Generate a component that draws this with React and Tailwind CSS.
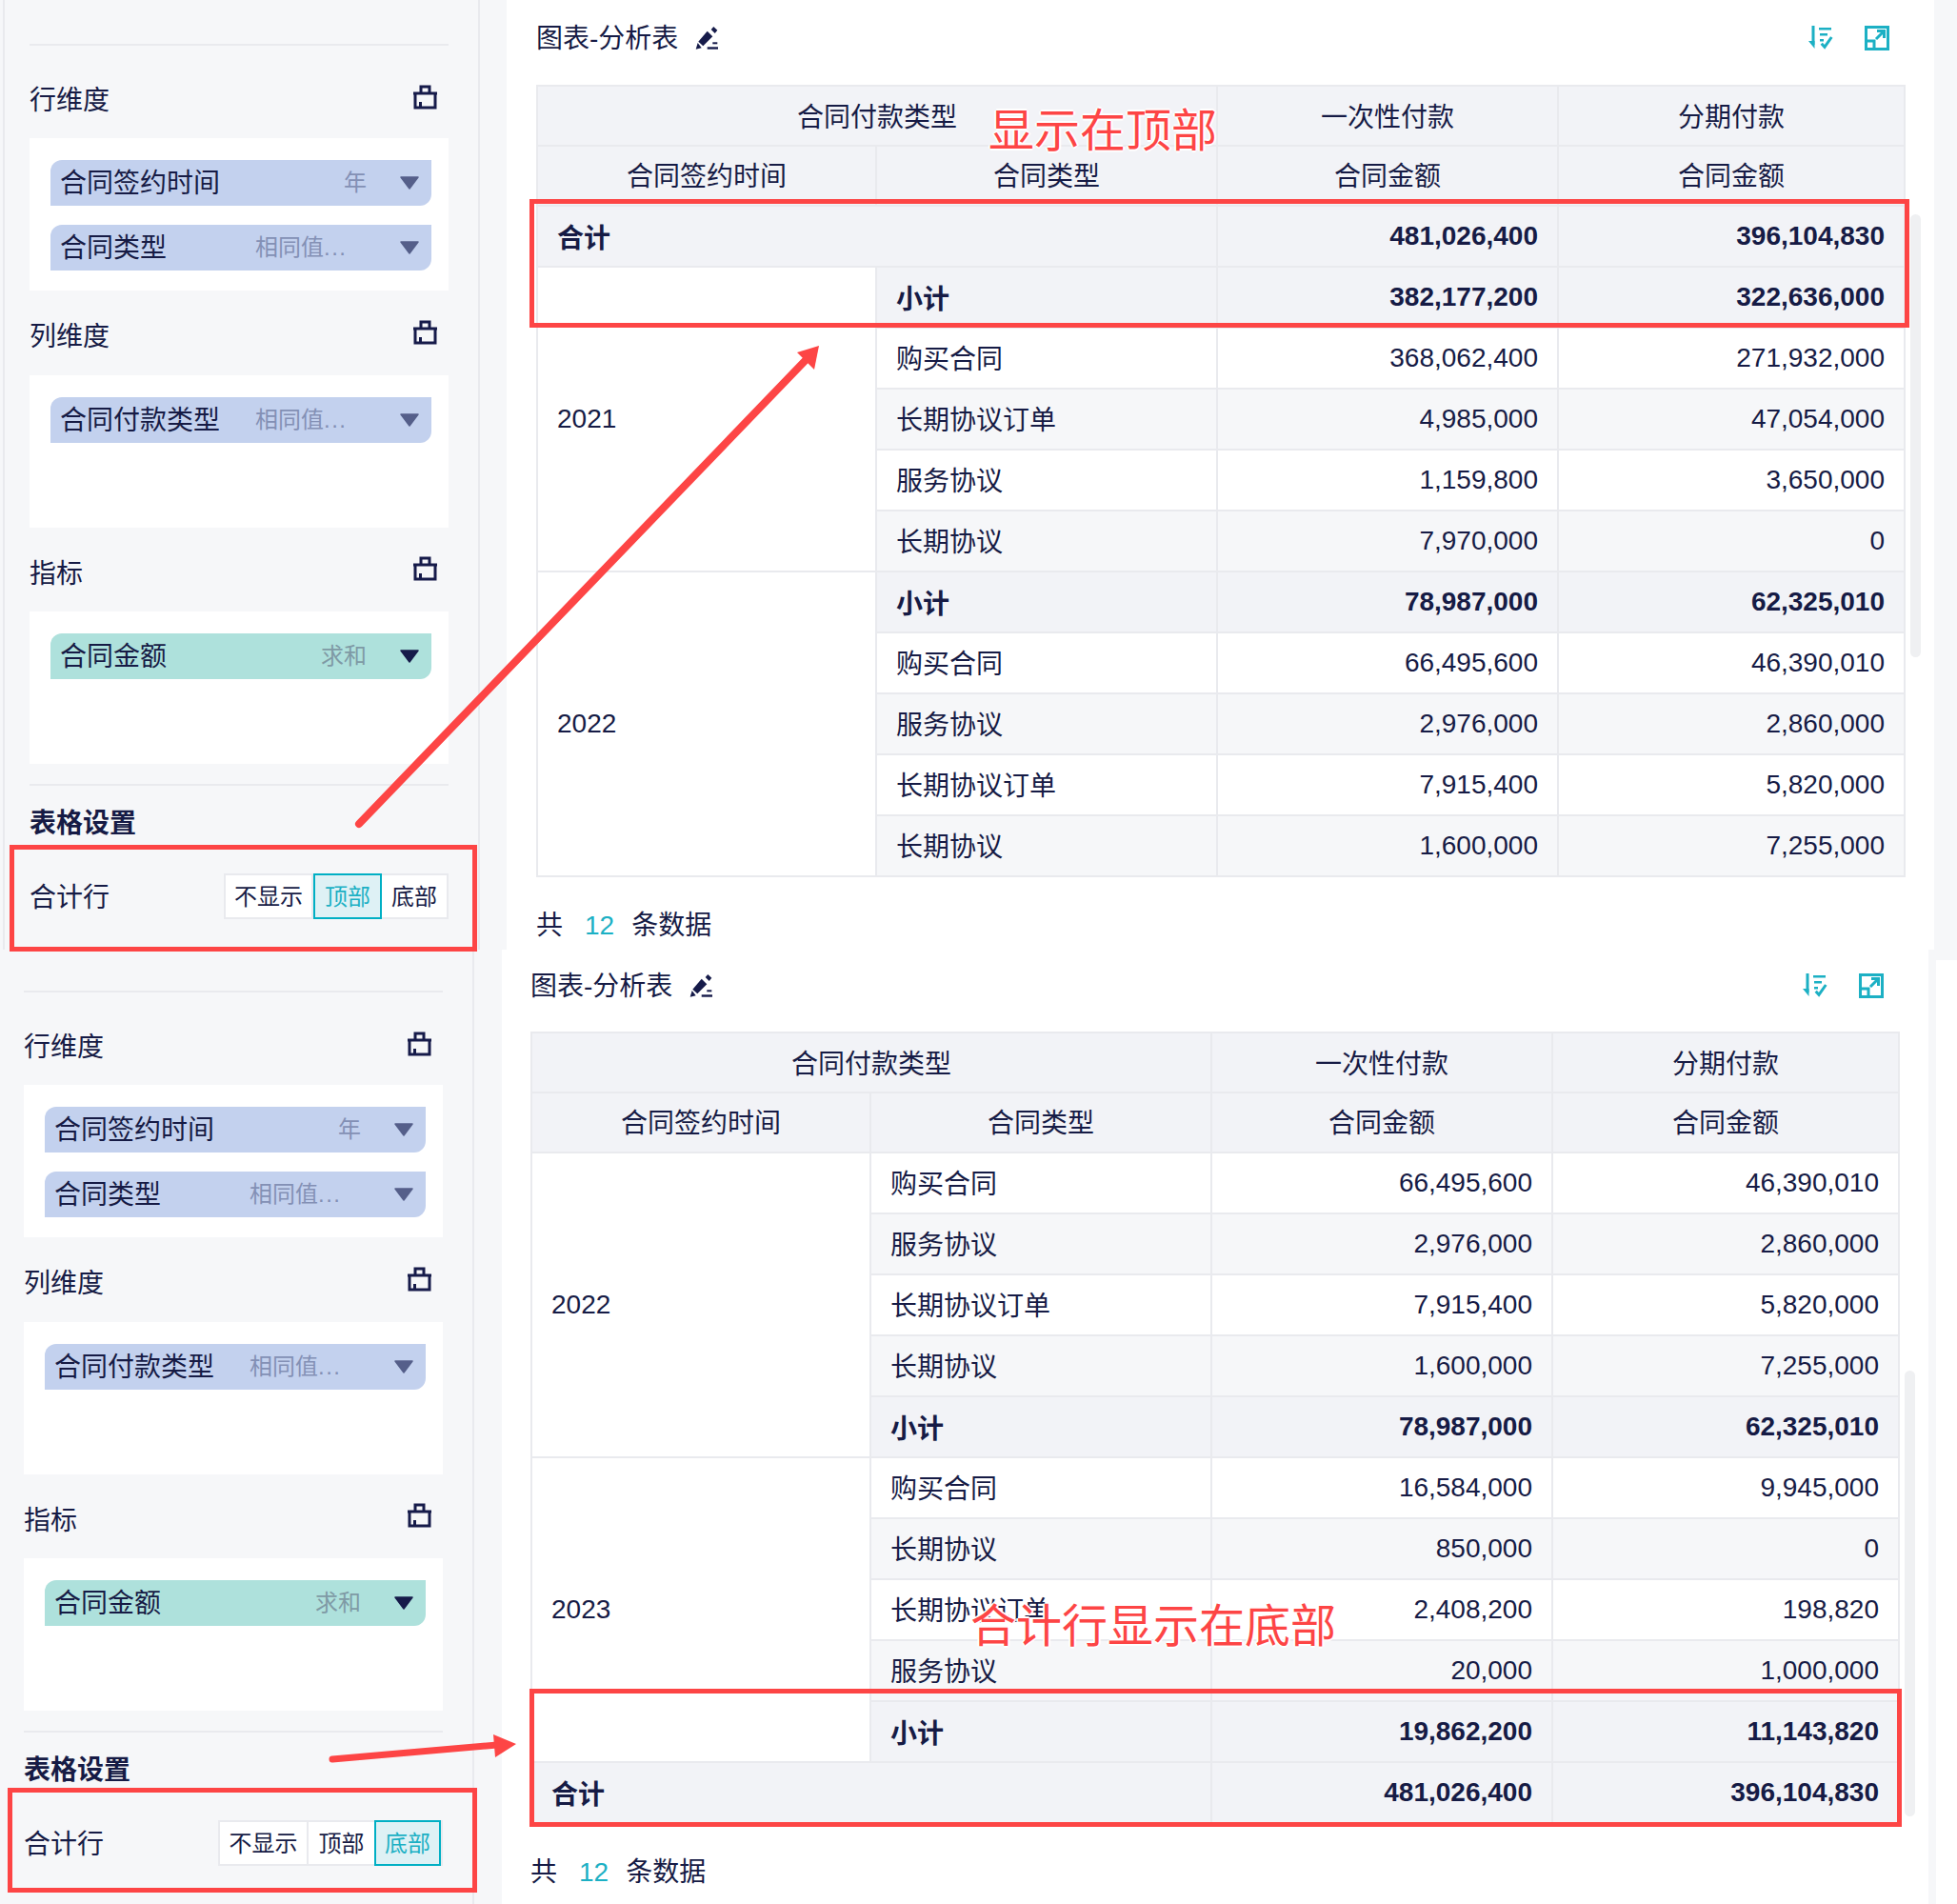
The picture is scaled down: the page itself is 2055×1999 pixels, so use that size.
import React from "react";

const topRows = [
  { total: true, name: "合计", a: "481,026,400", b: "396,104,830" },
  { year: "2021", span: 5, sub: true, name: "小计", a: "382,177,200", b: "322,636,000" },
  { name: "购买合同", a: "368,062,400", b: "271,932,000" },
  { name: "长期协议订单", a: "4,985,000", b: "47,054,000", odd: true },
  { name: "服务协议", a: "1,159,800", b: "3,650,000" },
  { name: "长期协议", a: "7,970,000", b: "0", odd: true },
  { year: "2022", span: 5, sub: true, name: "小计", a: "78,987,000", b: "62,325,010" },
  { name: "购买合同", a: "66,495,600", b: "46,390,010" },
  { name: "服务协议", a: "2,976,000", b: "2,860,000", odd: true },
  { name: "长期协议订单", a: "7,915,400", b: "5,820,000" },
  { name: "长期协议", a: "1,600,000", b: "7,255,000", odd: true },
];

const bottomRows = [
  { year: "2022", span: 5, name: "购买合同", a: "66,495,600", b: "46,390,010" },
  { name: "服务协议", a: "2,976,000", b: "2,860,000", odd: true },
  { name: "长期协议订单", a: "7,915,400", b: "5,820,000" },
  { name: "长期协议", a: "1,600,000", b: "7,255,000", odd: true },
  { sub: true, name: "小计", a: "78,987,000", b: "62,325,010" },
  { year: "2023", span: 5, name: "购买合同", a: "16,584,000", b: "9,945,000" },
  { name: "长期协议", a: "850,000", b: "0", odd: true },
  { name: "长期协议订单", a: "2,408,200", b: "198,820" },
  { name: "服务协议", a: "20,000", b: "1,000,000", odd: true },
  { sub: true, name: "小计", a: "19,862,200", b: "11,143,820" },
  { total: true, name: "合计", a: "481,026,400", b: "396,104,830" },
];

const cell = "border-2 border-[#e9eaee] px-[20px] font-normal";

function BucketIcon() {
  return (
    <svg width="27" height="26" viewBox="0 0 27 26" fill="none" stroke="#161b4a" strokeWidth="3" className="-translate-y-[3px]">
      <path d="M9 9V2h9v7M1 9h25M3 9v15h21V9M8.5 24v-6" />
    </svg>
  );
}

function Caret({ color }) {
  return (
    <svg width="20" height="14" viewBox="0 0 20 14" className="shrink-0">
      <polygon points="1,1 19,1 10,13" fill={color} stroke={color} strokeWidth="1.5" strokeLinejoin="round" />
    </svg>
  );
}

function Pill({ label, extra, green, left }) {
  return (
    <div className={`flex h-[48px] w-[400px] items-center rounded-tl-[12px] rounded-br-[12px] pl-[10px] pr-[13px] ${green ? "bg-[#aee1dc]" : "bg-[#c3d1ee]"}`}>
      <span className="flex-1 pt-[2px] text-[28px]">{label}</span>
      <span className={`mr-[35px] w-[117px] text-[24px] ${left ? "text-left" : "text-right"} ${green ? "text-[#7f9aa5]" : "text-[#8390b5]"}`}>
        {extra}
        {left && <span className="tracking-[1.5px]">...</span>}
      </span>
      <Caret color={green ? "#161b4a" : "#555f8a"} />
    </div>
  );
}

function Section({ title, size, children }) {
  const heights = {
    first: "h-[97px] pt-[16px]",
    middle: "h-[89px] pt-[4px]",
    last: "h-[88px] pt-[4px]",
  };
  return (
    <>
      <div className={`flex items-center justify-between pr-[11px] text-[28px] ${heights[size]}`}>
        <span className={size === "first" ? "pt-[3px]" : "pt-[5px]"}>{title}</span>
        <BucketIcon />
      </div>
      <div className="flex h-[160px] flex-col gap-[20px] bg-white pl-[22px] pt-[23px]">{children}</div>
    </>
  );
}

function Segment({ active, widths }) {
  const items = ["不显示", "顶部", "底部"];
  return (
    <div className="flex h-[48px] border-2 border-[#e9eaee] bg-white text-[24px]">
      {items.map((t, i) =>
        t === active ? (
          <div key={t} style={{ width: widths[i] }} className="-my-[2px] flex h-[48px] items-center justify-center border-2 border-[#00afc4] bg-[#def1f5] pt-[2px] text-[#1cb0c4]">
            {t}
          </div>
        ) : (
          <div key={t} style={{ width: widths[i] }} className={`flex items-center justify-center pt-[2px] ${i === 0 ? "border-r-2 border-[#e9eaee]" : ""}`}>
            {t}
          </div>
        )
      )}
    </div>
  );
}

function SidePanel({ second }) {
  return (
    <div className={`h-full shrink-0 bg-[#f6f7f9] ${second ? "w-[527px] pl-0" : "w-[532px] pl-[3px]"}`}>
      <div className={`flex h-full w-fit flex-col border-r-2 border-[#e9eaee] pr-[31px] ${second ? "pl-[25px] pt-[43px]" : "border-l-2 pl-[26px] pt-[46px]"}`}>
        <div className="w-[440px]">
          <div className="h-[2px] bg-[#e9eaee]"></div>
          <Section title="行维度" size="first">
            <Pill label="合同签约时间" extra="年" />
            <Pill label="合同类型" extra="相同值" left />
          </Section>
          <Section title="列维度" size="middle">
            <Pill label="合同付款类型" extra="相同值" left />
          </Section>
          <Section title="指标" size="last">
            <Pill label="合同金额" extra="求和" green />
          </Section>
          <div className="mt-[21px] h-[2px] bg-[#e9eaee]"></div>
          <div className="mt-[20px] h-[40px] text-[28px] font-bold leading-[40px]">表格设置</div>
          <div className="mt-[32px] flex items-center justify-between">
            <span className="pt-[3px] text-[28px]">合计行</span>
            {second ? <Segment active="底部" widths={[93, 69, 70]} /> : <Segment active="顶部" widths={[92, 72, 68]} />}
          </div>
        </div>
      </div>
    </div>
  );
}

function DataTable({ rows }) {
  return (
    <table className="w-[1436px] table-fixed border-collapse text-[28px]">
      <colgroup>
        <col className="w-[356px]" />
        <col className="w-[358px]" />
        <col className="w-[358px]" />
        <col className="w-[364px]" />
      </colgroup>
      <thead className="bg-[#f2f3f7]">
        <tr className="h-[63px]">
          <th colSpan={2} className={`${cell} pt-[4px]`}>合同付款类型</th>
          <th className={`${cell} pt-[4px]`}>一次性付款</th>
          <th className={`${cell} pt-[4px]`}>分期付款</th>
        </tr>
        <tr className="h-[63px]">
          <th className={`${cell} pt-[3px]`}>合同签约时间</th>
          <th className={`${cell} pt-[3px]`}>合同类型</th>
          <th className={`${cell} pt-[3px]`}>合同金额</th>
          <th className={`${cell} pt-[3px]`}>合同金额</th>
        </tr>
      </thead>
      <tbody>
        {rows.map((r, i) => {
          const strong = r.total || r.sub;
          const bg = strong ? "bg-[#f2f3f7] !font-bold" : r.odd ? "bg-[#f6f7f9]" : "bg-white";
          return (
            <tr key={i} className="h-[64px]">
              {r.total ? (
                <td colSpan={2} className={`${cell} bg-[#f2f3f7] pt-[5px] !font-bold`}>{r.name}</td>
              ) : (
                <>
                  {r.year && <td rowSpan={r.span} className={`${cell} bg-white`}>{r.year}</td>}
                  <td className={`${cell} ${bg} ${strong ? "pt-[5px]" : "pt-[3px]"}`}>{r.name}</td>
                </>
              )}
              <td className={`${cell} ${bg} text-right`}>{r.a}</td>
              <td className={`${cell} ${bg} text-right`}>{r.b}</td>
            </tr>
          );
        })}
      </tbody>
    </table>
  );
}

function TitleBar({ second }) {
  return (
    <div className={`flex items-center justify-between pr-[47px] ${second ? "h-[86px] pb-[10px]" : "h-[89px] pb-[9px]"}`}>
      <div className="flex items-center gap-[18px] text-[28px]">
        <span className="pt-[2px]">图表-分析表</span>
        <svg width="25" height="25" viewBox="0 0 25 25" fill="#161b4a">
          <polygon points="12.7,4.7 18.3,10.3 8.3,20.3 3.3,15.7" />
          <polygon points="19.3,0 23.3,3.7 20.7,7 16.7,3" />
          <polygon points="2.7,17 6.7,22.3 0.7,23.7" />
          <rect x="18.3" y="16.3" width="5" height="2" />
          <rect x="12.7" y="21.3" width="11.3" height="2.4" />
        </svg>
      </div>
      <div className="flex items-center gap-[33px]">
        <svg width="26" height="26" viewBox="0 0 26 26" fill="#1cb0c4">
          <rect x="3.5" y="0" width="3" height="20" />
          <polygon points="0,16 6.5,16 6.5,24" />
          <rect x="11" y="2" width="13" height="2.5" />
          <rect x="12" y="8" width="8" height="2.5" />
          <rect x="12" y="14" width="4" height="2.5" />
          <path d="M13.7 18.7L17 22.3L24.3 12" fill="none" stroke="#1cb0c4" strokeWidth="3" />
        </svg>
        <svg width="26" height="26" viewBox="0 0 26 26" fill="none" stroke="#1cb0c4" strokeWidth="3">
          <rect x="1.5" y="1.5" width="23" height="23" />
          <path d="M1.5 16H10V24.5M12 14L20 6M13 5.5H20.5V13" />
        </svg>
      </div>
    </div>
  );
}

function Footer() {
  return (
    <div className="flex h-[69px] items-end text-[28px] leading-[36px]">
      <span>共</span>
      <span className="ml-[23px] text-[#1cb0c4]">12</span>
      <span className="ml-[18px]">条数据</span>
    </div>
  );
}

function Scrollbar({ className }) {
  return <div className={`absolute w-[11px] rounded-[6px] bg-[#eff0f2] ${className}`}></div>;
}

function RedBox({ className }) {
  return <div className={`pointer-events-none absolute border-[5px] border-[#fd4545] ${className}`}></div>;
}

function Note({ className, children }) {
  return (
    <div className={`absolute whitespace-nowrap text-[48px] leading-[60px] text-[#fd4545] [text-shadow:2px_0_0_#fff,-2px_0_0_#fff,0_2px_0_#fff,0_-2px_0_#fff] ${className}`}>
      {children}
    </div>
  );
}

export default function App() {
  return (
    <div className="relative w-[2055px] overflow-hidden bg-white text-[#161b45] [font-family:'Liberation_Sans','Noto_Sans_CJK_SC',sans-serif]">
      {/* 上半：合计行在顶部 */}
      <div className="flex h-[997px]">
        <SidePanel />
        <div className="w-[1499px] shrink-0 pl-[31px]">
          <TitleBar />
          <DataTable rows={topRows} />
          <Footer />
        </div>
        <div className="flex-1 bg-[#f6f7f9]"></div>
      </div>

      {/* 下半：合计行在底部 */}
      <div className="flex h-[1002px]">
        <SidePanel second />
        <div className="w-[1498px] shrink-0 pl-[30px]">
          <TitleBar second />
          <DataTable rows={bottomRows} />
          <Footer />
        </div>
        <div className="w-[8px] shrink-0 bg-[#f6f7f9]"></div>
      </div>

      <div className="absolute left-[2033px] top-[997px] h-[11px] w-[22px] bg-[#f6f7f9]"></div>
      <Scrollbar className="left-[2006px] top-[225px] h-[465px]" />
      <Scrollbar className="left-[2000px] top-[1439px] h-[468px]" />

      <RedBox className="left-[556px] top-[209px] h-[135px] w-[1449px]" />
      <RedBox className="left-[10px] top-[887px] h-[112px] w-[491px]" />
      <RedBox className="left-[556px] top-[1773px] h-[145px] w-[1441px]" />
      <RedBox className="left-[8px] top-[1877px] h-[110px] w-[493px]" />

      <Note className="left-[1038px] top-[108px]">显示在顶部</Note>
      <Note className="left-[1019px] top-[1678px]">合计行显示在底部</Note>

      <svg className="pointer-events-none absolute left-0 top-0" width="2055" height="1999" viewBox="0 0 2055 1999">
        <path d="M377 865L848 376" stroke="#fd4545" strokeWidth="8" strokeLinecap="round" />
        <polygon points="860,363 837,370 855,388" fill="#fd4545" />
        <path d="M349 1847L522 1832" stroke="#fd4545" strokeWidth="7" strokeLinecap="round" />
        <polygon points="542,1831 518,1821 520,1845" fill="#fd4545" />
      </svg>
    </div>
  );
}
